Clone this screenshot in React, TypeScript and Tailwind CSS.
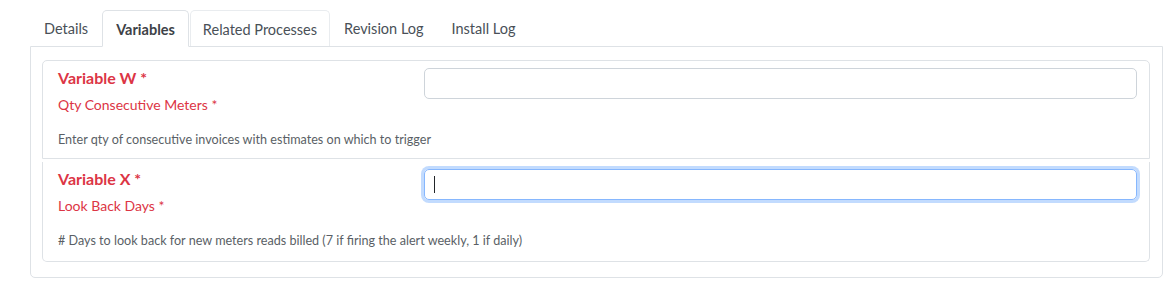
const variables = [
  {
    name: 'Variable W *',
    label: 'Qty Consecutive Meters *',
    help: 'Enter qty of consecutive invoices with estimates on which to trigger',
    focused: false,
  },
  {
    name: 'Variable X *',
    label: 'Look Back Days *',
    help: '# Days to look back for new meters reads billed (7 if firing the alert weekly, 1 if daily)',
    focused: true,
  },
];

function Tab({ label }: { label: string }) {
  if (label === 'Variables') {
    return (
      <div className="relative -mb-px h-[37px] px-[13px] pt-[2px] flex items-center border border-[#dee2e6] border-b-white rounded-t-[5px] bg-white text-[14.5px] font-bold text-[#3d4247]">
        {label}
      </div>
    );
  }
  if (label === 'Related Processes') {
    return (
      <div className="ml-px h-[36px] px-[12px] pt-[2px] flex items-center border border-[#e9ecef] border-b-0 rounded-t-[5px] text-[14.5px] text-[#495057]">
        {label}
      </div>
    );
  }
  return (
    <div className="h-[36px] px-[14px] pt-[2px] flex items-center text-[14.5px] text-[#495057]">{label}</div>
  );
}

export default function App() {
  return (
    <div className="w-[1173px] h-[292px] bg-white pt-[10px] pl-[30px] pr-[10px] font-['Lato',sans-serif]">
      <div className="flex items-end">
        <Tab label="Details" />
        <Tab label="Variables" />
        <Tab label="Related Processes" />
        <Tab label="Revision Log" />
        <Tab label="Install Log" />
      </div>
      <div className="border border-[#dee2e6] rounded-b-[5px] pt-[13px] pb-[15px] pl-[11px] pr-[12px]">
        {variables.map((v, i) => (
          <div
            key={v.name}
            className={
              i === 0
                ? 'border border-[#dee2e6] rounded-t-[5px] pl-[15px] pr-[12px] pt-[5px] h-[99px] flex'
                : 'mt-[3px] border border-t-0 border-[#dee2e6] rounded-b-[5px] pl-[15px] pr-[12px] pt-[5px] h-[100px] flex'
            }
          >
            <div className="w-[366px] shrink-0 flex flex-col">
              <div className="h-[24px] flex items-center text-[16px] font-bold text-[#dc3545]">{v.name}</div>
              <div className="mt-[2px] h-[24px] flex items-center text-[14px] text-[#dc3545]">{v.label}</div>
              <div className="mt-[14px] h-[20px] flex items-center whitespace-nowrap text-[12.6px] text-[#5a5f66]">{v.help}</div>
            </div>
            <div className="flex-1 pt-[2px]">
              <div
                className={
                  v.focused
                    ? 'h-[31px] rounded-[5px] border border-[#86b7fe] shadow-[0_0_0_3px_rgba(13,110,253,0.25)] flex items-center pl-[9px]'
                    : 'h-[31px] rounded-[5px] border border-[#ced4da]'
                }
              >
                {v.focused && <div className="w-px h-[17px] bg-[#212529]" />}
              </div>
            </div>
          </div>
        ))}
      </div>
    </div>
  );
}
